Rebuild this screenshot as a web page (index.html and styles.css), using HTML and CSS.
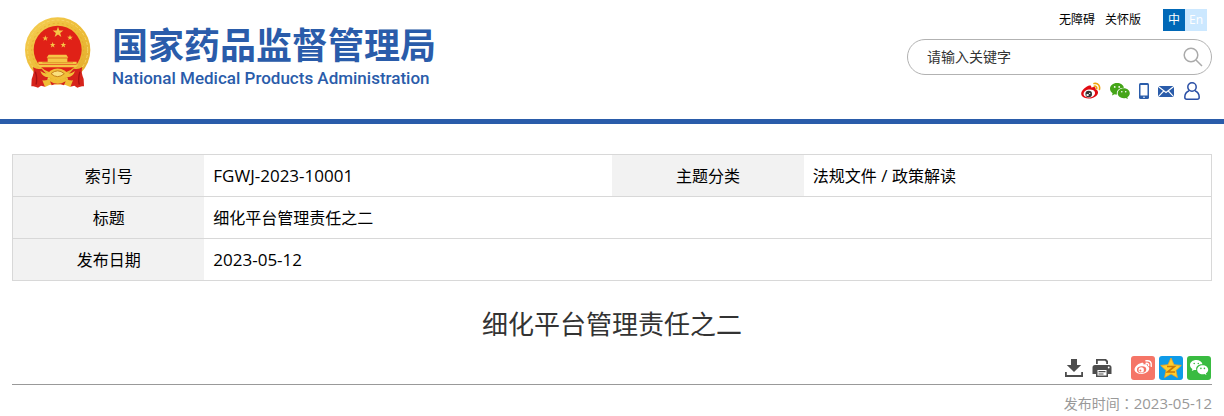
FILE: index.html
```html
<!DOCTYPE html>
<html lang="zh-CN">
<head>
    <meta charset="UTF-8">
    <title>细化平台管理责任之二</title>
    <link rel="stylesheet" href="styles.css">
</head>
<body>
    <header class="header">
        <a class="logo" href="#">
            <svg class="emblem" viewBox="27 20 201 213" aria-hidden="true">
                <defs>
                    <linearGradient id="gold" x1="0" y1="0" x2="1" y2="1">
                        <stop offset="0" stop-color="#f5cf55"/>
                        <stop offset="0.5" stop-color="#edbd38"/>
                        <stop offset="1" stop-color="#e3ac2e"/>
                    </linearGradient>
                    <path id="star" d="M0-10 2.4-3.1 9.5-3.1 3.8 1.2 5.9 8.1 0 4 -5.9 8.1 -3.8 1.2 -9.5-3.1 -2.4-3.1Z"/>
                </defs>
                <circle cx="128" cy="119" r="98" fill="url(#gold)"/>
                <circle cx="128" cy="119" r="90" fill="none" stroke="#f6d566" stroke-width="3" stroke-dasharray="9 6"/>
                <circle cx="128" cy="117" r="78" fill="none" stroke="#dfa62b" stroke-width="2" stroke-dasharray="6 8"/>
                <circle cx="128" cy="118" r="72" fill="#e02117"/>
                <g fill="#f6c646">
                    <use href="#star" transform="translate(129 66) scale(1.7)"/>
                    <use href="#star" transform="translate(91 84) scale(.9)"/>
                    <use href="#star" transform="translate(165 82) scale(.9)"/>
                    <use href="#star" transform="translate(113 104) scale(.9)"/>
                    <use href="#star" transform="translate(145 104) scale(.9)"/>
                    <path d="M101 133h53l6 9H95zM98 143h59v11h28v8H70v-8h28z"/>
                    <path d="M66 163h124l-7 8H73z"/>
                </g>
                <path d="M98 144h59M82 157h92" stroke="#d2861c" stroke-width="2"/>
                <path d="M54 170q10 9 26 5l20 23-10 31-12-3-9 6-16-6q10-29 1-56zM202 170q-10 9-26 5l-20 23 10 31 12-3 9 6 16-6q-10-29-1-56z" fill="#d6231b"/>
                <path d="M56 172q2 14-6 34l-1 22 18 0 20-40zM200 172q-2 14 6 34l1 22-18 0-20-40z" fill="#d6231b"/>
                <path d="M61 184q7 20 2 39M195 184q-7 20-2 39" fill="none" stroke="#a90f11" stroke-width="4"/>
                <path d="M76 182q20 15 30-1 22-13 44 0 11 16 30 1-7 21-27 18-25 17-50 0-20 3-27-18z" fill="#f1bf38"/>
                <path d="M108 190q20-17 40 0-20 18-40 0z" fill="#fae07d" stroke="#c6811b" stroke-width="3"/>
                <path d="M82 210q20 1 31-6 15 12 30 0 13 7 31 6l-8 20q-20-11-38-7-21-4-38 7z" fill="#f0bd35"/>
                <path d="M105 213q23 15 47 0l-5 12q-19-8-37 0z" fill="#d6231b"/>
            </svg>
            <span class="logo-text">
                <span class="logo-cn">国家药品监督管理局</span>
                <span class="logo-en">National Medical Products Administration</span>
            </span>
        </a>
        <div class="header-right">
            <nav class="top-links">
                <a href="#">无障碍</a>
                <a href="#">关怀版</a>
                <div class="lang">
                    <a class="lang-cn" href="#">中</a>
                    <a class="lang-en" href="#">En</a>
                </div>
            </nav>
            <form class="search">
                <input type="text" aria-label="搜索" placeholder="请输入关键字">
                <button type="submit" aria-label="搜索">
                    <svg width="20" height="20" viewBox="0 0 20 20" fill="none" stroke="#aaa" stroke-width="1.5"><circle cx="8" cy="8" r="6.8"/><path d="m13 13 6 6"/></svg>
                </button>
            </form>
            <div class="socials">
                <a href="#" aria-label="微博">
                    <svg width="20" height="18" viewBox="0 0 20 18">
                        <path fill="#e10b12" d="M7.4 3.8c2-.9 3.2-.3 2.8 1.8 3-1.2 5-.5 4.3 1.7 3 .9 3.3 4 1.2 6.200-2.500 2.700-8.300 4.100-12.200 2.300C-.4 14-.8 10.800 2 7.800c1.500-1.700 3.400-3.300 5.400-4z"/>
                        <ellipse cx="8.300" cy="11.500" rx="5.800" ry="4" transform="rotate(-8 8 11.500)" fill="#fff"/>
                        <circle cx="7.700" cy="12" r="3.300" fill="#333"/>
                        <ellipse cx="6.600" cy="12.900" rx="1.300" ry="1" fill="#fff"/>
                        <circle cx="8.700" cy="11.400" r=".6" fill="#fff"/>
                        <path d="M13 1.500c3.800-.8 6.400 2 5.400 6M13.200 4.200c1.800-.3 2.900.8 2.500 2.500" fill="none" stroke="#f0a40c" stroke-width="1.600" stroke-linecap="round"/>
                    </svg>
                </a>
                <a href="#" aria-label="微信">
                    <svg width="20" height="18" viewBox="0 0 20 18">
                        <path fill="#45a518" d="M7 1C3 1 0 3.500 0 6.700c0 1.900 1 3.400 2.600 4.500L2 13.500l2.600-1.300c.9.200 1.500.3 2.400.3-1-4 2.400-7 7-6.800C13.400 3 10.500 1 7 1z"/>
                        <path fill="#45a518" d="M13.800 6.300c-3.500 0-6.100 2.200-6.100 5s2.600 4.900 6.100 4.900c.7 0 1.300-.1 1.900-.3l2.200 1.200-.6-1.900c1.500-.9 2.500-2.300 2.500-3.900 0-2.800-2.600-5-6-5z"/>
                        <g fill="#fff"><circle cx="4.700" cy="4.900" r=".9"/><circle cx="9.200" cy="4.900" r=".9"/><circle cx="11.800" cy="9.800" r=".8"/><circle cx="15.700" cy="9.800" r=".8"/></g>
                    </svg>
                </a>
                <a href="#" aria-label="手机客户端">
                    <svg width="10" height="18" viewBox="0 0 10 18"><rect y="1" width="10" height="16" rx="1.500" fill="#2a5caa"/><path fill="#fff" d="M1.500 3h7v10.500h-7z"/><circle cx="5" cy="15.200" r=".8" fill="#fff"/></svg>
                </a>
                <a href="#" aria-label="邮箱">
                    <svg width="16" height="18" viewBox="0 0 16 18"><path fill="#2a5caa" d="M0 4h16v11H0z"/><path d="m0 4.300 8 6.200 8-6.200M.3 14.700 5.700 9M15.700 14.700 10.300 9" fill="none" stroke="#fff" stroke-width="1.100"/></svg>
                </a>
                <a class="user" href="#" aria-label="个人中心">
                    <svg width="16" height="18" viewBox="0 0 16 18" fill="none" stroke="#2a4fa5" stroke-width="1.500"><circle cx="8" cy="5" r="4.200"/><path d="M5 8.800C2.200 10 .8 12.500.8 15.200q0 2 2 2h10.400q2 0 2-2c0-2.700-1.400-5.200-4.200-6.400"/></svg>
                </a>
            </div>
        </div>
    </header>

    <main class="content">
        <table class="info">
            <tr>
                <th scope="row">索引号</th>
                <td class="num">FGWJ-2023-10001</td>
                <th scope="row">主题分类</th>
                <td>法规文件<span class="num"> / </span>政策解读</td>
            </tr>
            <tr>
                <th scope="row">标题</th>
                <td colspan="3">细化平台管理责任之二</td>
            </tr>
            <tr>
                <th scope="row">发布日期</th>
                <td class="num" colspan="3">2023-05-12</td>
            </tr>
        </table>

        <h1>细化平台管理责任之二</h1>

        <div class="tools">
            <button type="button" aria-label="下载">
                <svg width="20" height="20" viewBox="0 0 20 20" fill="#4d4d4d"><path d="M7 1h6v6h4.200L10 14 2.800 7H7z"/><path d="M1 14h1.800v3h14.400v-3H19v5H1z"/></svg>
            </button>
            <button type="button" aria-label="打印">
                <svg width="20" height="20" viewBox="0 0 20 20"><path fill="#4d4d4d" d="M4 1h10l2 2v3H4zM3 7h14q2.500 0 2.500 2.500V16H16v3H4v-3H.5V9.500Q.5 7 3 7z"/><path fill="#fff" d="M5.800 2.800h7.200l1.200 1.200V6H5.800zM5.500 12h9v5.500h-9z"/><path fill="#4d4d4d" d="M6.500 13h7v1.200h-7zM6.500 15.400h5v1.200h-5z"/><circle cx="16.700" cy="9.500" r=".9" fill="#fff"/></svg>
            </button>
            <div class="share">
                <a class="share-weibo" href="#" aria-label="分享到微博">
                    <svg width="24" height="24" viewBox="0 0 24 24">
                        <path fill="#fff" d="M10.200 7.100c1.700-.7 2.700-.1 2.300 1.500 2.600-.9 4.200-.3 3.600 1.500 2.400.8 2.800 3.200 1 5.100-2.200 2.400-7.300 3.500-10.600 2-3.500-1.600-3.800-4.500-1.300-7.200 1.400-1.400 3.100-2.500 5-2.900z"/>
                        <ellipse cx="10.600" cy="13.700" rx="4.700" ry="3.400" transform="rotate(-8 10.600 13.700)" fill="#f57567"/>
                        <circle cx="10.200" cy="13.900" r="2.700" fill="#fff"/>
                        <circle cx="9.400" cy="14.500" r="1" fill="#f57567"/>
                        <path d="M15 4.800c3.700-.8 6.100 1.700 5.200 5.400M15.200 7.300c1.700-.3 2.700.6 2.400 2.200" fill="none" stroke="#fff" stroke-width="1.500" stroke-linecap="round"/>
                    </svg>
                </a>
                <a class="share-qzone" href="#" aria-label="分享到QQ空间">
                    <svg width="24" height="24" viewBox="0 0 24 24">
                        <path fill="#ffce2e" stroke="#f9a51a" stroke-width=".8" stroke-linejoin="round" d="m12 2 3 6.700 7.300.7-5.400 5 1.500 7.200-6.400-3.700-6.400 3.700 1.500-7.200-5.400-5 7.300-.7z"/>
                        <path d="M8 10.500h7.500l-7 5.500H16" fill="none" stroke="#c77a08" stroke-width="1.600"/>
                    </svg>
                </a>
                <a class="share-wechat" href="#" aria-label="分享到微信">
                    <svg width="24" height="24" viewBox="0 0 24 24">
                        <path fill="#fff" d="M9.300 4C5.700 4 3 6.200 3 9c0 1.700.9 3.100 2.400 4l-.6 2 2.300-1.100c.8.200 1.400.2 2.200.2-.9-3.500 2-6.100 6.200-5.900C15 5.700 12.400 4 9.300 4z"/>
                        <path fill="#fff" d="M15.700 9.200c-3.200 0-5.500 2-5.500 4.500s2.300 4.500 5.500 4.500c.6 0 1.200-.1 1.700-.2l2 1.100-.5-1.800c1.400-.8 2.300-2.100 2.300-3.600 0-2.500-2.400-4.500-5.500-4.500z"/>
                        <g fill="#39bb41"><circle cx="7.200" cy="7.500" r=".8"/><circle cx="11.300" cy="7.500" r=".8"/><circle cx="13.900" cy="12.400" r=".8"/><circle cx="17.400" cy="12.400" r=".8"/></g>
                    </svg>
                </a>
            </div>
        </div>
        <p class="pub-time">发布时间<span class="colon" lang="zh-TW">：</span><time datetime="2023-05-12">2023-05-12</time></p>
    </main>
</body>
</html>
```

FILE: styles.css
```css
* {
    box-sizing: border-box;
}
body {
    margin: 0;
    background: #fff;
    color: #000;
    font-family: "Open Sans", "Noto Sans CJK SC", sans-serif;
    font-size: 16px;
}
a {
    color: inherit;
    text-decoration: none;
}
svg {
    display: block;
}
button {
    padding: 0;
    border: 0;
    background: none;
    cursor: pointer;
}

/* header */
.header {
    display: flex;
    justify-content: space-between;
    align-items: flex-start;
    padding: 9px 12px 19px;
    border-bottom: 5px solid #2a5caa;
}
.logo {
    display: flex;
    gap: 21px;
    padding: 8px 0 0 12px;
    color: #2a5caa;
}
.emblem {
    width: 67px;
    height: 71px;
}
.logo-text {
    display: flex;
    flex-direction: column;
    padding-top: 6px;
}
.logo-cn {
    font-family: "Noto Sans CJK SC", sans-serif;
    font-size: 36px;
    font-weight: 700;
    line-height: 40px;
}
.logo-en {
    margin-top: 3px;
    font-family: Roboto, sans-serif;
    font-size: 17px;
    font-weight: 500;
    line-height: 24px;
}
.header-right {
    width: 305px;
}
.top-links {
    display: flex;
    justify-content: flex-end;
    gap: 10px;
    padding-right: 5px;
    font-size: 12px;
    line-height: 22px;
}
.lang {
    display: flex;
    margin-left: 12px;
    color: #fff;
    text-align: center;
}
.lang a {
    width: 22px;
}
.lang-cn {
    background: #0068b7;
}
.lang-en {
    background: #cce8ff;
}
.search {
    display: flex;
    align-items: center;
    height: 36px;
    margin-top: 8px;
    padding: 0 8px 0 19px;
    border: 1px solid #b2b2b2;
    border-radius: 18px;
}
.search input {
    flex: 1;
    min-width: 0;
    padding: 0 0 2px;
    border: 0;
    outline: none;
    background: none;
    font-family: inherit;
    font-size: 14px;
}
.search input::placeholder {
    color: #333;
}
.socials {
    display: flex;
    justify-content: flex-end;
    gap: 9px;
    margin-top: 7px;
    padding-right: 12px;
}
.user {
    margin-left: 1px;
}

/* article info */
.content {
    padding: 30px 12px 0;
}
.info {
    width: 100%;
    border: 1px solid #d8d8d8;
    border-collapse: collapse;
    table-layout: fixed;
    line-height: 24px;
}
.info tr {
    height: 42px;
    border-bottom: 1px solid #d8d8d8;
}
.info th,
.info td {
    padding: 0 9px;
    font-weight: 400;
    text-align: left;
}
.info th {
    width: 16%;
    background: #f2f2f2;
    background-clip: padding-box;
    text-align: center;
}
.info .num {
    font-size: 17px;
}
h1 {
    margin: 24px 0 12px;
    color: #333;
    font-size: 26px;
    font-weight: 400;
    line-height: 39px;
    text-align: center;
}
.tools {
    display: flex;
    justify-content: flex-end;
    align-items: center;
    gap: 8px;
    padding: 0 1px 4px 0;
    border-bottom: 1px solid #999;
}
.share {
    display: flex;
    gap: 4px;
    margin-left: 11px;
}
.share a {
    border-radius: 3px;
    overflow: hidden;
}
.share-weibo {
    background: #f57567;
}
.share-qzone {
    background: #0e9be8;
}
.share-wechat {
    background: #39bb41;
}
.pub-time {
    margin: 8px 0 0;
    color: #999;
    font-size: 14px;
    line-height: 21px;
    text-align: right;
}
.pub-time .colon {
    font-family: "Noto Sans CJK TC", sans-serif;
}
.pub-time time {
    font-size: 15px;
}
```
